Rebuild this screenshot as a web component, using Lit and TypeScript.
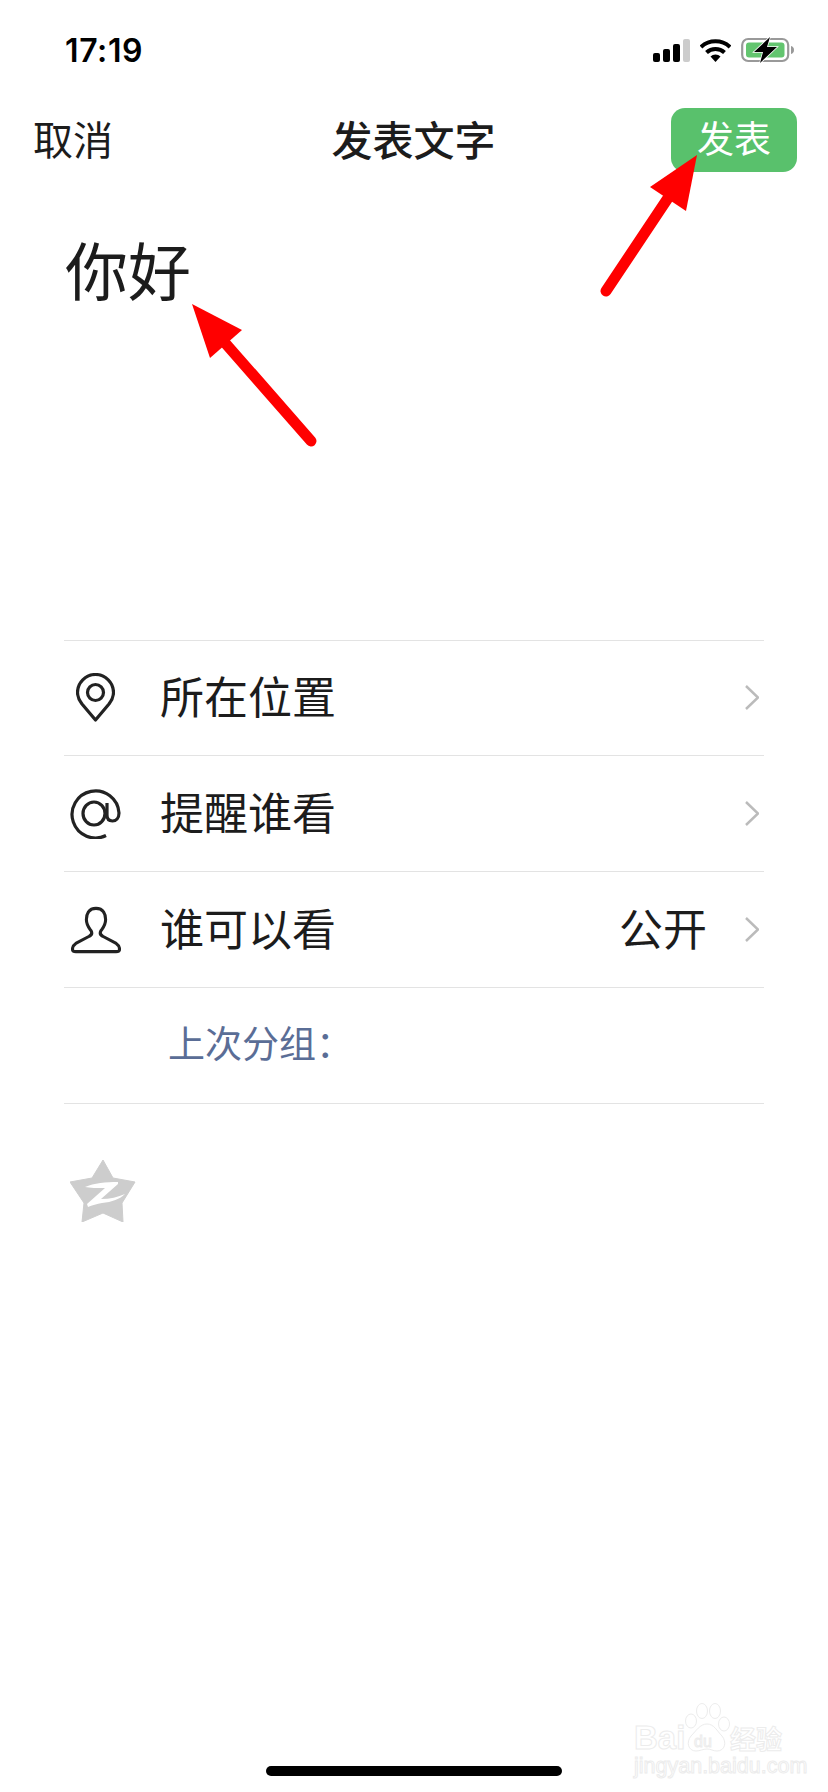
import { LitElement, css, html, svg } from "lit";
import { customElement } from "lit/decorators.js";

const chevron = html`<svg class="chevron" viewBox="0 0 14 25"><polyline points="1,1 13,12.5 1,24" /></svg>`;

const pinIcon = html`<svg class="icon pin" viewBox="0 0 39 49">
  <path d="M19.5 47 L6 31 C3 27 1.5 24 1.5 19.5 A18 18 0 0 1 37.5 19.5 C37.5 24 36 27 33 31 Z" />
  <circle cx="19.5" cy="19.5" r="8" />
</svg>`;

const atIcon = html`<svg class="icon at" viewBox="0 0 51 51">
  <path d="M36 47.5 A23.5 23.5 0 1 1 49 25 C49 30 46 33 42.5 33 C39 33 37 31 37 27 L37 15" />
  <ellipse cx="24" cy="25.5" rx="11" ry="11.5" />
</svg>`;

const personIcon = html`<svg class="icon person" viewBox="0 0 52 48">
  <path d="M26 1.5 C18 1.5 16 8 16 13 C16 19 19 22 21 25 C22 27 22 29 19 30.5 L5 38 C2 40 1.5 42 1.5 44 C1.5 46 3 46.5 5 46.5 L47 46.5 C49 46.5 50.5 46 50.5 44 C50.5 42 50 40 47 38 L33 30.5 C30 29 30 27 31 25 C33 22 36 19 36 13 C36 8 34 1.5 26 1.5 Z" />
</svg>`;

@customElement("app-root")
export class AppRoot extends LitElement {
  static styles = css`
    :host {
      display: flex;
      flex-direction: column;
      position: relative;
      width: 828px;
      height: 1792px;
      overflow: hidden;
      background: #fff;
      color: #1c1c1c;
      font-family: "Noto Sans CJK SC", "Liberation Sans", sans-serif;
    }
    .status {
      display: flex;
      justify-content: space-between;
      align-items: center;
      height: 100px;
      padding: 0 33px 0 65px;
      box-sizing: border-box;
    }
    .time {
      font-family: Inter, "Liberation Sans", sans-serif;
      font-size: 32px;
      font-weight: 600;
      color: #000;
      letter-spacing: 0.6px;
    }
    .status-icons {
      display: flex;
      align-items: center;
      gap: 10px;
    }
    .signal {
      display: flex;
      align-items: flex-end;
      gap: 3px;
      height: 23px;
    }
    .signal i {
      display: block;
      width: 7px;
      background: #000;
      border-radius: 2px;
    }
    .signal i:nth-child(1) { height: 9px; }
    .signal i:nth-child(2) { height: 13px; }
    .signal i:nth-child(3) { height: 18px; }
    .signal i:nth-child(4) { height: 23px; background: #ccc; }
    .wifi { width: 31px; height: 24px; }
    .battery { width: 54px; height: 26px; }
    .nav {
      display: grid;
      grid-template-columns: 1fr auto 1fr;
      align-items: center;
      height: 64px;
      margin-top: 8px;
      padding: 0 31px 0 33px;
    }
    .cancel { font-size: 40px; line-height: 60px; margin-bottom: 4px; }
    .title { font-size: 41px; font-weight: 500; line-height: 60px; margin: 0 3px 4px 0; }
    .publish {
      justify-self: end;
      width: 126px;
      height: 64px;
      line-height: 58px;
      text-align: center;
      border-radius: 14px;
      background: #59c16c;
      color: #fff;
      font-size: 37px;
    }
    .editor {
      height: 468px;
      box-sizing: border-box;
      padding: 54px 65px 0;
      font-size: 63px;
      line-height: 84px;
    }
    .list {
      margin: 0 64px;
      border-top: 1px solid #e3e3e3;
    }
    .row {
      display: flex;
      align-items: center;
      height: 116px;
      box-sizing: border-box;
      border-bottom: 1px solid #e3e3e3;
      padding-right: 5px;
    }
    .row:first-child { margin-top: -1px; }
    .icon-cell {
      display: flex;
      justify-content: center;
      width: 62px;
      margin-right: 34px;
    }
    .icon {
      fill: none;
      stroke: #222;
      stroke-width: 3.2;
      stroke-linejoin: round;
    }
    .pin { width: 39px; height: 49px; }
    .at { width: 51px; height: 51px; }
    .person { width: 50px; height: 48px; margin-left: 1px; }
    .label { flex: 1; font-size: 44px; margin-bottom: 6px; }
    .value { font-size: 44px; margin: 0 38px 6px 0; }
    .chevron {
      width: 14px;
      height: 25px;
      fill: none;
      stroke: #bbb;
      stroke-width: 2.5;
    }
    .group {
      padding-left: 104px;
      padding-bottom: 7px;
      font-size: 37px;
      color: #5a6d96;
    }
    .qzone {
      display: block;
      width: 66px;
      height: 62px;
      margin: 56px 0 0 70px;
    }
    .home {
      width: 296px;
      height: 10px;
      margin: auto 0 16px 266px;
      border-radius: 5px;
      background: #000;
    }
    .arrows {
      position: absolute;
      inset: 0;
      width: 828px;
      height: 1792px;
      pointer-events: none;
    }
    .arrows polygon { fill: #f00; }
    .arrows line { stroke: #f00; stroke-width: 11; stroke-linecap: round; }
    .mark {
      position: absolute;
      left: 634px;
      top: 1703px;
      width: 150px;
      height: 74px;
      color: #fff;
      -webkit-text-stroke: 1px #ececec;
      font-family: "Liberation Sans", sans-serif;
    }
    .mark span { position: absolute; white-space: nowrap; }
    .mark svg { position: absolute; left: 50px; top: 0; width: 46px; height: 50px; }
    .mark .bai { left: 0; top: 20px; font-size: 33px; font-weight: 700; line-height: 30px; }
    .mark .du { left: 60px; top: 30px; font-size: 16px; line-height: 18px; }
    .mark .cn {
      left: 96px;
      top: 20px;
      font-size: 26px;
      font-weight: 700;
      line-height: 30px;
      font-family: "Noto Sans CJK SC", sans-serif;
    }
    .mark .url { left: 0; top: 51px; font-size: 21.5px; line-height: 24px; }
  `;

  render() {
    return html`
      <div class="status">
        <span class="time">17:19</span>
        <div class="status-icons">
          <div class="signal"><i></i><i></i><i></i><i></i></div>
          <svg class="wifi" viewBox="0 0 31 24">
            <path d="M1 9 A21.500 21.500 0 0 1 30 9" fill="none" stroke="#000" stroke-width="4" />
            <path d="M6.500 14.500 A13 13 0 0 1 24.500 14.500" fill="none" stroke="#000" stroke-width="4" />
            <path d="M10.5 18.5 A7 7 0 0 1 20.5 18.5 L15.5 24 Z" fill="#000" />
          </svg>
          <svg class="battery" viewBox="0 0 54 26">
            <rect x="1.2" y="2" width="46" height="22" rx="6" fill="none" stroke="#999" stroke-width="2.2" />
            <rect x="5" y="5.5" width="38.500" height="15" rx="3" fill="#63c56f" />
            <path d="M50 9 C52 9.500 53 11 53 13 C53 15 52 16.500 50 17 Z" fill="#999" />
            <polygon points="29,0 13,15 22,15 19,26 36,10 26,10" fill="#000" stroke="#fff" stroke-width="1.500" paint-order="stroke" />
          </svg>
        </div>
      </div>

      <div class="nav">
        <span class="cancel">取消</span>
        <span class="title">发表文字</span>
        <span class="publish">发表</span>
      </div>

      <div class="editor">你好</div>

      <div class="list">
        <div class="row">
          <div class="icon-cell">${pinIcon}</div>
          <span class="label">所在位置</span>
          ${chevron}
        </div>
        <div class="row">
          <div class="icon-cell">${atIcon}</div>
          <span class="label">提醒谁看</span>
          ${chevron}
        </div>
        <div class="row">
          <div class="icon-cell">${personIcon}</div>
          <span class="label">谁可以看</span>
          <span class="value">公开</span>
          ${chevron}
        </div>
        <div class="row group">上次分组：</div>
      </div>

      <svg class="qzone" viewBox="0 0 66 62">
        <polygon points="33,0 43,18 65,22 52,43 53,62 33,53 12,62 14,43 0,22 22,18" fill="#cdcdcd" stroke="#cdcdcd" stroke-linejoin="round" />
        <path d="M15 27 C24 23 36 22 48 22 L48 24 L31 39 C40 39 48 37 55 34 C50 39 42 42 32 43 C27 44 22 45 18 47 L17 44 L35 28 C27 28 20 28 15 27 Z" fill="#fff" />
      </svg>

      <div class="home"></div>

      <div class="mark">
        <span class="bai">Bai</span>
        <svg viewBox="0 0 46 50" fill="#fff" stroke="#ececec" stroke-width="1">
          <ellipse cx="7" cy="18" rx="5.500" ry="7" />
          <ellipse cx="18" cy="8" rx="5.500" ry="7.500" />
          <ellipse cx="31" cy="8" rx="5.500" ry="7.500" />
          <ellipse cx="40" cy="21" rx="5.500" ry="7" />
          <path d="M23 21 C30 21 33 28 38 33 C43 39 41 48 33 48 C29 48 27 46 23 46 C19 46 16 48 12 48 C4 48 2 39 7 33 C12 28 16 21 23 21 Z" />
        </svg>
        <span class="du">du</span>
        <span class="cn">经验</span>
        <span class="url">jingyan.baidu.com</span>
      </div>

      <svg class="arrows" viewBox="0 0 828 1792">
        ${svg`
          <line x1="668" y1="198" x2="606" y2="291" />
          <polygon points="697,155 650,187 686,211" />
          <line x1="226" y1="344" x2="311" y2="441" />
          <polygon points="192,304 242,330 210,358" />
        `}
      </svg>
    `;
  }
}
